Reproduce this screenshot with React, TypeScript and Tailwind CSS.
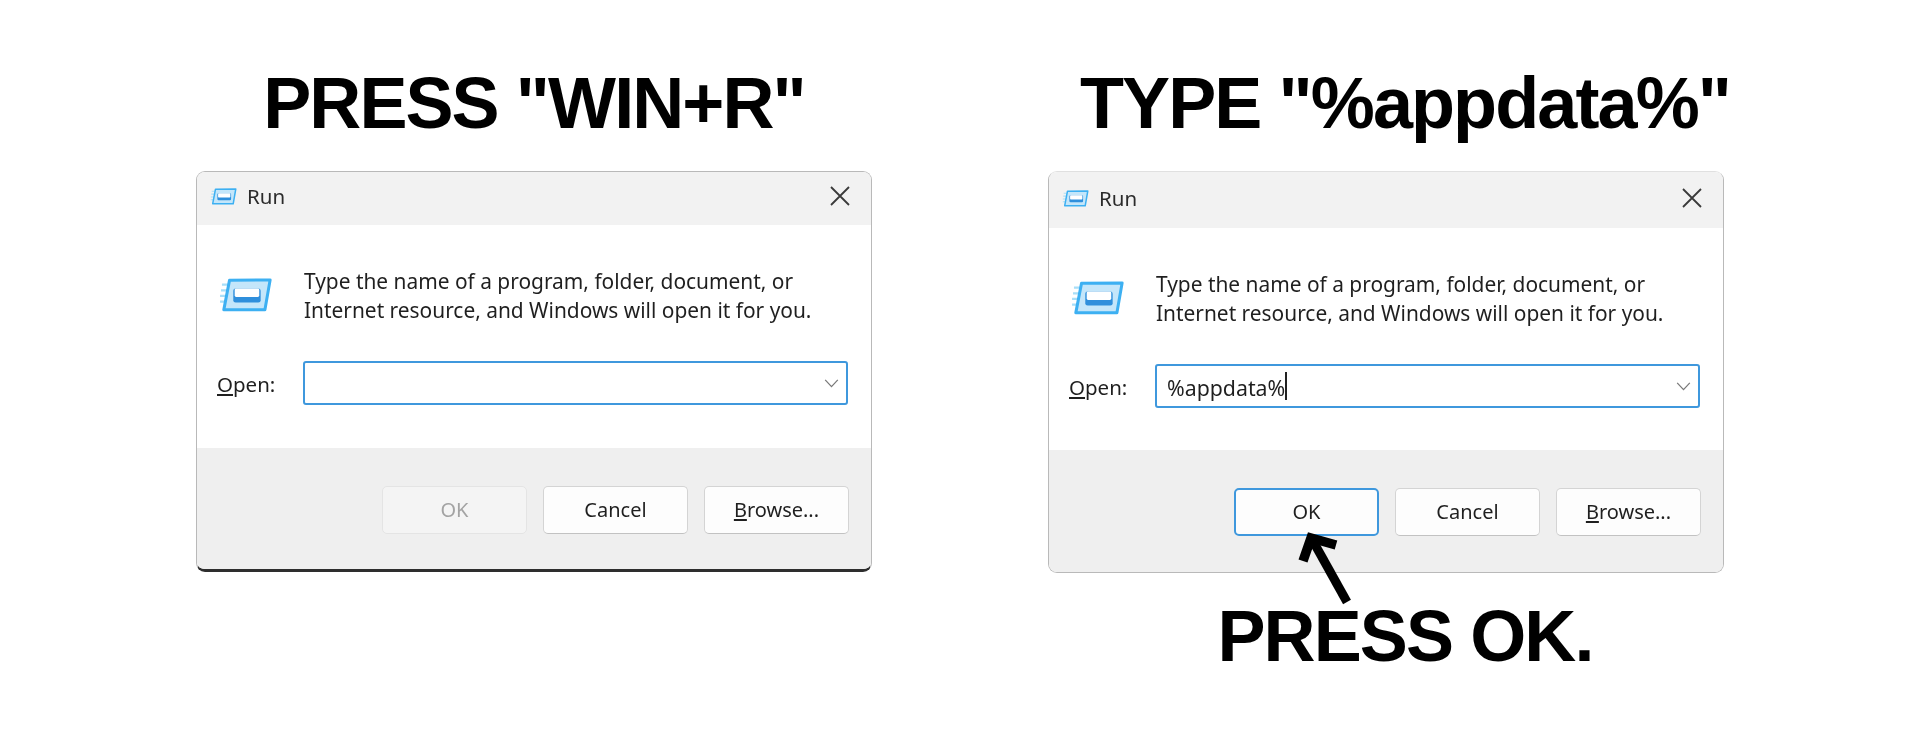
import React from "react";

function RunIcon({ className }: { className: string }) {
  return (
    <svg viewBox="0 0 54 36" className={className} fill="none">
      <path d="M1 7h8M0 13h8M-1 19h7M-1 25h6" stroke="#a8def8" strokeWidth="2.4" />
      <path d="M9 2.5 L52 2 L46.5 33.5 L3 33.5 Z" fill="#c4e6fa" stroke="#3db0f2" strokeWidth="3.2" strokeLinejoin="round" />
      <rect x="13" y="11" width="29" height="15" rx="2.5" fill="#2f8fdc" />
      <rect x="14.5" y="11" width="26" height="9" rx="1.5" fill="#ffffff" />
    </svg>
  );
}

function Dialog({ titleH, footerH, dark, okState, value }: { titleH: string; footerH: string; dark?: boolean; okState: "disabled" | "focus"; value?: string }) {
  const btn = "w-[145px] h-[48px] rounded-[5px] bg-[#fdfdfd] border border-[#d4d4d4] border-b-[#c2c2c2] flex items-center justify-center text-[20px] text-[#1f1f1f]";
  return (
    <div
      className={`flex flex-col h-full w-[676px] rounded-[9px] overflow-hidden bg-white border border-[#b9b9b9] blur-[0.35px] ${dark ? "border-b-[3px] border-b-[#2e2e2e]" : "border-t-[#e0e0e0]"}`}
      style={{ fontFamily: '"Noto Sans", sans-serif' }}
    >
      <div className={`${titleH} shrink-0 bg-[#f2f2f2] flex items-center pl-[14px] pr-[21px]`}>
        <RunIcon className="w-[26px] h-[17px] mr-[10px] overflow-visible" />
        <span className="text-[20.5px] text-[#2b2b2b]">Run</span>
        <svg viewBox="0 0 20 20" className="ml-auto w-[20px] h-[20px]" stroke="#3a3a3a" strokeWidth="1.8">
          <path d="M1 1L19 19M19 1L1 19" />
        </svg>
      </div>
      <div className="flex-1 flex flex-col pl-[20px] pr-[23px] pt-[42px]">
        <div className="flex">
          <RunIcon className="w-[51px] h-[36px] mt-[10px] ml-[4px] overflow-visible shrink-0" />
          <p className="ml-[32px] text-[20.9px] leading-[29px] text-[#1f1f1f] whitespace-nowrap">
            Type the name of a program, folder, document, or
            <br />
            Internet resource, and Windows will open it for you.
          </p>
        </div>
        <div className="flex items-center mt-[36px]">
          <span className="w-[86px] text-[20.5px] text-[#1f1f1f] pt-[3px]">
            <span className="underline underline-offset-2">O</span>pen:
          </span>
          <div className="flex-1 h-[44px] border-2 border-[#3f98dd] rounded-[3px] flex items-center pl-[10px] pr-[7px]">
            {value && <span className="text-[21.3px] text-[#1f1f1f] pt-[3px]">{value}</span>}
            {value && <span className="w-[2px] h-[28px] bg-[#222222]" />}
            <svg viewBox="0 0 16 10" className="ml-auto w-[15px] h-[9px]" fill="none" stroke="#7a7a7a" strokeWidth="1.4">
              <path d="M1 1L8 8.5L15 1" />
            </svg>
          </div>
        </div>
      </div>
      <div className={`${footerH} shrink-0 bg-[#efefef] flex justify-end gap-[16px] pr-[22px]`}>
        {okState === "disabled" ? (
          <div className="w-[145px] h-[48px] rounded-[5px] bg-[#f4f4f4] border border-[#e4e4e4] flex items-center justify-center text-[20px] text-[#a3a3a3]">OK</div>
        ) : (
          <div className="w-[145px] h-[48px] rounded-[5px] bg-[#fdfdfd] border-2 border-[#3f98dd] flex items-center justify-center text-[20px] text-[#1f1f1f]">OK</div>
        )}
        <div className={btn}>Cancel</div>
        <div className={btn}>
          <span><span className="underline underline-offset-2">B</span>rowse...</span>
        </div>
      </div>
    </div>
  );
}

export default function App() {
  const head = "font-bold text-black text-[72px] tracking-[-1.9px] leading-[86px] whitespace-nowrap text-center";
  const font = { fontFamily: '"Liberation Sans", Arial, sans-serif' };
  return (
    <div className="w-[1920px] h-[744px] bg-white flex gap-[176px] pl-[196px] overflow-hidden" style={font}>
      <div className="w-[676px] flex flex-col">
        <div className={`${head} pt-[60px] h-[171px]`}>PRESS "WIN+R"</div>
        <div className="h-[401px]">
          <Dialog titleH="h-[53px] pb-[5px]" footerH="h-[121px] pt-[38px]" dark okState="disabled" />
        </div>
      </div>
      <div className="w-[676px] flex flex-col relative">
        <div className={`${head} pt-[60px] h-[171px] w-[714px]`}>TYPE "%appdata%"</div>
        <div className="h-[402px]">
          <Dialog titleH="h-[56px] pb-[4px]" footerH="h-[122px] pt-[38px]" okState="focus" value="%appdata%" />
        </div>
        <div className={`${head} pl-[38px] mt-[20px]`}>PRESS OK.</div>
        <svg className="absolute left-0 top-0 w-[676px] h-[744px] pointer-events-none" viewBox="1048 0 676 744" fill="none" stroke="#000000">
          <path d="M1347 602L1313 541" strokeWidth="9" />
          <path d="M1303 561L1311 538L1336 545" strokeWidth="9.5" />
        </svg>
      </div>
    </div>
  );
}
